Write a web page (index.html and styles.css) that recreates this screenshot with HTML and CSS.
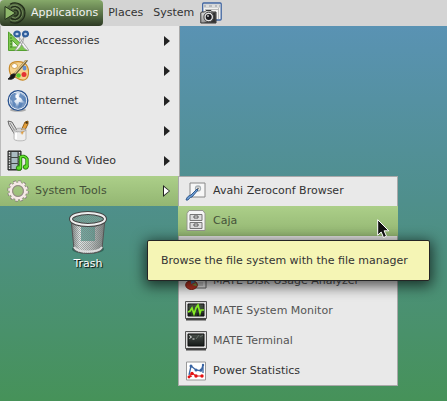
FILE: index.html
```html
<!DOCTYPE html>
<html lang="en">
<head>
<meta charset="utf-8">
<title>MATE Desktop</title>
<link rel="stylesheet" href="styles.css">
</head>
<body>
<svg class="defs" aria-hidden="true">
  <defs>
    <linearGradient id="metal" x2="1"><stop stop-color="#777"/><stop offset=".25" stop-color="#f4f4f4"/><stop offset=".6" stop-color="#ccc"/><stop offset="1" stop-color="#777"/></linearGradient>
    <linearGradient id="screen" x2="0" y2="1"><stop stop-color="#49504b"/><stop offset="1" stop-color="#151a18"/></linearGradient>
    <linearGradient id="cam" x2="1" y2="1"><stop stop-color="#eee"/><stop offset="1" stop-color="#555"/></linearGradient>
    <radialGradient id="globe" cx=".45" cy=".35"><stop stop-color="#fff"/><stop offset=".6" stop-color="#d5e2f1"/><stop offset="1" stop-color="#7597c3"/></radialGradient>
    <pattern id="mesh" width="2" height="2" patternUnits="userSpaceOnUse"><path d="M0 0h1v1H0zM1 1h1v1H1z" fill="#777" fill-opacity=".55"/></pattern>
  </defs>
</svg>
<header class="panel">
  <nav class="panel-menu">
    <button class="panel-button active"><svg class="logo" viewBox="0 0 22 22"><circle cx="11" cy="11" r="10" fill="#3c4d2f" fill-opacity=".6"/><g fill="none" stroke="#202a18"><path d="M6 2.300A10 10 0 1 1 6 19.700" stroke-width="1.200"/><path d="M6 4.300A8 8 0 1 1 6 17.700" stroke="#7d9b63" stroke-width=".8"/><path d="M7 5.700A6.500 6.500 0 1 1 7 16.300" stroke-width="1.200"/><path d="M8 6.800a5 5 0 1 1 0 8.400" stroke="#7d9b63" stroke-width=".8"/><path d="M10 8.200a3 3 0 1 1 0 5.600" stroke-width="1.200"/></g><path d="M1 4.500 11.500 11 1 17.500Z" fill="#8fb86b" stroke="#23301a"/></svg>Applications</button>
    <button class="panel-button">Places</button>
    <button class="panel-button">System</button>
    <button class="launcher" aria-label="Take screenshot"><svg class="logo" viewBox="0 0 22 22"><rect x="2.700" y="1" width="18.500" height="17" rx="1" fill="#f2f2f0" stroke="#3f64a0" stroke-width="1.300"/><path d="M4 2.500h16v3H4z" fill="#b7babd"/><path d="M6 4h3M12 4h3M17 4h2" stroke="#fff"/><path d="M18.500 6v11M5 7.500h13" stroke="#bbb"/><path d="M1.500 10h3l1.500-1.500h5L12.500 10H16v11H.8V11Z" fill="url(#cam)" stroke="#333"/><path d="M11 10.500h4.500v10H4l6-2Z" fill="#333"/><circle cx="8.700" cy="15" r="4.800" fill="#e5e5e5" stroke="#444"/><circle cx="8.700" cy="15" r="3" fill="#1d1d22"/><circle cx="8" cy="14" r="1" fill="#bbb"/></svg></button>
  </nav>
</header>

<main class="desktop">
  <ul class="menu">
    <li class="row"><button class="item"><svg class="icon" viewBox="0 0 22 22"><path d="M1.500 2v18.500H20.500Z" fill="#7ec850" stroke="#54a130"/><path d="M5 10v7h7Z" fill="#e9f5e2" stroke="#54a130"/><path d="M3 5h2M3 8h2M3 11h2M3 14h2M3 17h2" stroke="#39771e"/><path d="M17 7 8 20.500c4 0 6-5 8-9ZM12 7l10 13.500c-4 0-7-5-9-9Z" fill="#f7f7f7" stroke="#999" stroke-width=".8"/><g fill="#bdd0e9" stroke="#315f9c" stroke-width="2.200"><ellipse cx="10" cy="4" rx="2.700" ry="2.400"/><ellipse cx="18.500" cy="4" rx="2.500" ry="2.400"/></g></svg><span>Accessories</span><i class="arrow"></i></button></li>
    <li class="row"><button class="item"><svg class="icon" viewBox="0 0 22 22"><path d="M3 5C5 1 16 0 19.500 5S22 19 17 20 10 17 7 17 1 11 3 5Z" fill="#f6d28d" stroke="#c98b2b" stroke-width="1.200"/><ellipse cx="7.500" cy="6" rx="3" ry="2.500" fill="#fff" stroke="#d0a14e"/><ellipse cx="17.500" cy="8" rx="2" ry="2.500" fill="#6490d0"/><circle cx="11.500" cy="15.500" r="2.300" fill="#55c72c"/><circle cx="17" cy="14.500" r="2.500" fill="#e43333"/><path d="M20 0 7 15" stroke="#5c5237" stroke-width="2.600"/><path d="M19.500 0 7 14" stroke="#e0c386" stroke-width="1.200"/><path d="M8 14c1 4-3 6-7 5 3-1 2-5 5-5Z" fill="#161616" stroke="#222"/></svg><span>Graphics</span><i class="arrow"></i></button></li>
    <li class="row"><button class="item"><svg class="icon" viewBox="0 0 22 22"><ellipse cx="11" cy="20" rx="8" ry="1.700" fill="#aaa"/><circle cx="11" cy="10.500" r="9.800" fill="#fff" stroke="#27518e" stroke-width="1.300"/><circle cx="11" cy="10.500" r="8.400" fill="url(#globe)"/><path d="M3 9c0-4 3-6 5-6l2 1-2 3 2 2-3 2 2 3-1 3-2-2-1-4ZM13 3l5 4 1 5-3-1-2-3-2-1ZM12 12l4 1-2 4-3 1Z" fill="#557fb5" fill-opacity=".85"/><path d="m8 5 3-1-1 3Z" fill="#fff"/></svg><span>Internet</span><i class="arrow"></i></button></li>
    <li class="row"><button class="item"><svg class="icon" viewBox="0 0 22 22"><path d="m1 1 4 1 6 10-3 3L2 5Z" fill="#ddd" stroke="#666"/><path d="m3 3 6 10" stroke="#888"/><path d="m18 2 3-1v3l-5 10-3-1Z" fill="#e7a038" stroke="#936019"/><path d="m20 1 1 2-1 1-2-1Z" fill="#443111"/><path d="M7 10h12v9c0 2.500-12 2.500-12 0Z" fill="#eee" fill-opacity=".88" stroke="#bbb"/><ellipse cx="13" cy="10" rx="6" ry="1.800" fill="none" stroke="#aaa"/><path d="M9 13v6" stroke="#fff" stroke-width="2"/><path d="m14 12 3-1-2 4Z" fill="#df9d40"/></svg><span>Office</span><i class="arrow"></i></button></li>
    <li class="row"><button class="item"><svg class="icon" viewBox="0 0 22 22"><path d="M1 1h13v19H1Z" fill="#424745" stroke="#222"/><path d="M4.500 2h6v5h-6Zm0 6h6v5h-6Zm0 6h6v5h-6Z" fill="#a9bbc1"/><path d="M2.500 2v18M12.500 2v18" stroke="#e5e5e5" stroke-width="1.400" stroke-dasharray="1.400 1.200"/><path d="M13.500 18V7c2-1 5-1 6.500 2v8" fill="none" stroke="#267d0b" stroke-width="3.400"/><ellipse cx="12" cy="18" rx="2.800" ry="2.300" fill="#5bdd27" stroke="#267d0b"/><ellipse cx="18.700" cy="17" rx="2.500" ry="2.200" fill="#5bdd27" stroke="#267d0b"/><path d="M13.500 18V7c2-1 5-1 6.500 2v8" fill="none" stroke="#66e832" stroke-width="1.600"/></svg><span>Sound &amp; Video</span><i class="arrow"></i></button></li>
    <li class="row"><button class="item selected"><svg class="icon" viewBox="0 0 22 22"><circle cx="11" cy="11" r="9.300" fill="none" stroke="#89867e" stroke-width="3" stroke-dasharray="2.870 2"/><circle cx="11" cy="11" r="7.200" fill="none" stroke="#89867e" stroke-width="4"/><circle cx="11" cy="11" r="8.900" fill="none" stroke="#f6e9e6" stroke-width="2" stroke-dasharray="2.660 2"/><circle cx="11" cy="11" r="7.200" fill="none" stroke="#f5e9e6" stroke-width="2.500"/><circle cx="11" cy="11" r="5.300" fill="none" stroke="#999087"/></svg><span>System Tools</span><i class="arrow open"></i></button>
      <ul class="menu submenu">
        <li class="row"><button class="item"><svg class="icon" viewBox="0 0 22 22"><path d="M5 3h15v14H5Z" fill="#f7f7f7" stroke="#888"/><circle cx="13" cy="8.500" r="2.500" fill="none" stroke="#a8b0b4" stroke-width="1.300"/><circle cx="13" cy="8.500" r="1" fill="#777"/><path d="M1 20c1-3 2-4 5-5l6-6 1 1-6 7c-2 0-3 2-4 3Z" fill="#6e9ed5" stroke="#31598c"/></svg><span>Avahi Zeroconf Browser</span></button></li>
        <li class="row"><button class="item selected"><svg class="icon" viewBox="0 0 22 22"><path d="M4 .5h14l2 3V20.500H2V3.500Z" fill="#f5f5f5" stroke="#96978f"/><path d="M5 4.500h12v6H5Zm0 8h12v6H5Z" fill="#ddd" stroke="#777"/><path d="M9 6h4v2H9Zm0 8h4v2H9Z" fill="#fff" stroke="#555"/></svg><span>Caja</span></button></li>
        <li class="row spacer"></li>
        <li class="row"><button class="item muted"><svg class="icon" viewBox="0 0 22 22"><path d="M4 3h17v15H4Z" fill="#e9e9e9" stroke="#666"/><path d="M13 12v4m2-4v4m2-4v4" stroke="#aaa"/><ellipse cx="6.500" cy="15" rx="5.800" ry="4.500" fill="#b83424" stroke="#802116"/><path d="M6 14V10l5 2Z" fill="#477eae"/><path d="m7 15 4-2 1 3Z" fill="#78a84b"/></svg><span>MATE Disk Usage Analyzer</span></button></li>
        <li class="row"><button class="item muted"><svg class="icon" viewBox="0 0 22 22"><path d="M.5 1.500h21v17H.5Z" fill="#ddd" stroke="#555"/><path d="M1 18h20v2.500H1Z" fill="#444"/><path d="M3 4h16v12H3Z" fill="url(#screen)" stroke="#111"/><path d="M3 8h16M3 12h16M7 4v12M11 4v12M15 4v12" stroke="#40652f" stroke-width=".6"/><path d="m3 12 2-1 2-3 2 6 2-6 2-3 2 8 1-3h3" fill="none" stroke="#85eb24" stroke-width="1.700"/></svg><span>MATE System Monitor</span></button></li>
        <li class="row"><button class="item muted"><svg class="icon" viewBox="0 0 22 22"><path d="M.5 1.500h21v17H.5Z" fill="#ddd" stroke="#555"/><path d="M1 18h20v2.500H1Z" fill="#444"/><path d="M3 4h16v12H3Z" fill="url(#screen)" stroke="#111"/><path d="m4.500 5.500 2 1.500-2 1.500M7.500 9h2" fill="none" stroke="#fff" stroke-width=".9"/><path d="m14 5-3 4M18 5l-3 2" stroke="#687069"/></svg><span>MATE Terminal</span></button></li>
        <li class="row"><button class="item"><svg class="icon" viewBox="0 0 22 22"><path d="M1.500 2h19v18h-19Z" fill="#fff" stroke="#999"/><path d="m4 15 2-9 5 4 5 1 2-6M18 5v8" fill="none" stroke="#3964a2" stroke-width="1.300"/><g fill="#3964a2"><circle cx="6" cy="6" r="1.500"/><circle cx="11" cy="10" r="1.500"/><circle cx="16" cy="10" r="1.500"/><circle cx="18" cy="5" r="1.200"/></g><path d="m4 17 3-4 4 3h6M4 17l3-1" fill="none" stroke="#df1717" stroke-width="1.200"/><g fill="#e41111"><circle cx="4" cy="17" r="1.400"/><circle cx="7" cy="13.500" r="1.700"/><circle cx="11" cy="16" r="1.700"/><circle cx="17" cy="16" r="1.700"/></g></svg><span>Power Statistics</span></button></li>
      </ul>
      <div class="tooltip" role="tooltip">Browse the file system with the file manager</div>
      <svg class="pointer" viewBox="0 0 13 20" aria-hidden="true"><path d="M.7.700v15.500l3.500-3.200 2.300 5.500 3-1.300-2.400-5.400h4.700Z" fill="#111" stroke="#fff"/></svg>
    </li>
  </ul>
  <button class="trash"><svg class="trash-icon" viewBox="0 0 40 46"><ellipse cx="20" cy="39" rx="16" ry="5" fill="#183c34" fill-opacity=".5"/><path d="m3 9 3 30c2 6 26 6 28 0l3-30Z" fill="url(#metal)" fill-opacity=".88"/><path d="M13 17h14v14H13Z" fill="#3f9083" fill-opacity=".65"/><path d="m3 9 3 30c2 6 26 6 28 0l3-30Z" fill="url(#mesh)" stroke="#555"/><path d="M6 37c3 6 25 6 28 0" fill="none" stroke="#ddd" stroke-width="2"/><ellipse cx="20" cy="9" rx="17" ry="6" fill="#6da69a"/><ellipse cx="20" cy="9" rx="17" ry="6" fill="url(#mesh)" stroke="#444" stroke-width="4"/><ellipse cx="20" cy="9" rx="17" ry="6" fill="none" stroke="#eee" stroke-width="2"/></svg><span>Trash</span></button>
</main>
</body>
</html>
```
FILE: styles.css
```css
* { box-sizing: border-box; }

html { height: 100%; }

body {
  margin: 0;
  min-height: 100%;
  overflow: hidden;
  font: 11px/16px "DejaVu Sans", sans-serif;
  color: #333;
  background: linear-gradient(#5b93b9, #4f8f8c 50%, #469259);
}

button {
  border: 0;
  padding: 0;
  margin: 0;
  background: none;
  color: inherit;
  font: inherit;
}

ul { list-style: none; margin: 0; padding: 0; }

.defs { position: absolute; width: 0; height: 0; }

.panel { height: 26px; background: #d4d4d4; }
.panel-menu { display: flex; height: 100%; }
.panel-button { display: flex; align-items: center; gap: 5px; padding: 0 5px; }
.panel-button.active {
  padding-left: 4px;
  border-radius: 4px;
  color: #f2f2f2;
  background: linear-gradient(#86a96a, #5c7549 50%, #2d3a24);
}
.launcher { display: flex; align-items: center; padding: 0 1px; }
.logo { width: 22px; height: 22px; }

.desktop { display: block; }

.menu {
  width: 180px;
  background: #e9e9e9;
  box-shadow: inset 1px 0 #bbb, inset -1px 0 #a9a9a9;
}
.row { position: relative; }
.spacer { height: 30px; }
.item {
  display: flex;
  align-items: center;
  gap: 6px;
  width: 100%;
  height: 30px;
  padding: 0 10px 0 7px;
  text-align: left;
}
.icon { width: 22px; height: 22px; flex: none; }
.item.muted { color: #555; }
.item.selected {
  color: #455239;
  background: linear-gradient(#accf89, #93b672);
}

.arrow {
  width: 6px;
  height: 10px;
  margin-left: auto;
  background: #222;
  clip-path: polygon(0 0, 100% 50%, 0 100%);
}
.arrow.open { position: relative; width: 7px; height: 12px; }
.arrow.open::after {
  content: "";
  position: absolute;
  inset: 2px 1px 2px 1px;
  background: #fff;
  clip-path: polygon(0 0, 100% 50%, 0 100%);
}

.submenu {
  position: absolute;
  left: 178px;
  top: 0;
  width: 220px;
  box-shadow: inset 0 0 0 1px #a9a9a9;
}

.tooltip {
  position: absolute;
  left: 147px;
  top: 64px;
  min-width: 283px;
  padding: 12px 13px 11px;
  border: 1px solid #252525;
  border-radius: 2px;
  background: #f5f5b5;
  white-space: nowrap;
  box-shadow: 0 3px 14px 2px rgba(0, 0, 0, 0.65);
}

.pointer {
  position: absolute;
  left: 377px;
  top: 43px;
  width: 13px;
  height: 20px;
}

.trash {
  display: flex;
  flex-direction: column;
  align-items: center;
  width: 80px;
  margin: 4px 0 0 48px;
  color: #fff;
  text-shadow: 1px 1px 1px #000;
}
.trash-icon { width: 40px; height: 46px; }
```
